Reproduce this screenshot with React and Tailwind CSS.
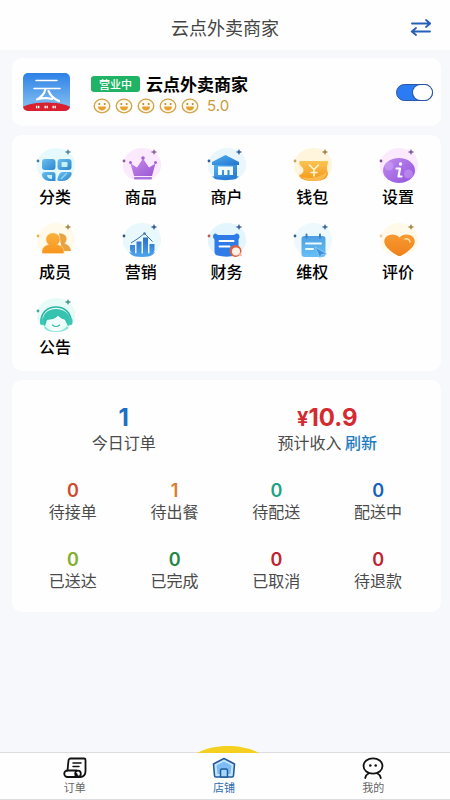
import { useState } from "react";

const IconFrame = ({ tint, spark, dot, children }) => (
    <svg viewBox="0 0 40 40" className="w-10 h-10 overflow-visible" aria-hidden="true">
        <path
            d="M21 2c10 0 18 6 19 15 1 8-4 14-10 16H11C5 30 1 25 2 18 3 9 11 2 21 2z"
            fill={tint}
        />
        <path d="M33 3.5l.8 1.7 1.9.8-1.9.8L33 8.5l-.8-1.7-1.9-.8 1.9-.8z" fill={spark} stroke={spark} strokeWidth="0.4" />
        <circle cx="3" cy="15" r="1.4" fill={dot || spark} />
        {children}
    </svg>
);

const CategoryIcon = () => (
    <IconFrame tint="#e6fafd" spark="#4a7f9c">
        <defs>
            <linearGradient id="cat" x1="0" y1="0" x2="1" y2="1">
                <stop offset="0" stopColor="#6cc0ee" />
                <stop offset="1" stopColor="#2a86cf" />
            </linearGradient>
        </defs>
        <rect x="7" y="13" width="13.5" height="11" rx="3" fill="url(#cat)" />
        <rect x="22.5" y="13" width="14" height="11" rx="3" fill="url(#cat)" />
        <rect x="26.5" y="16" width="6" height="5" rx="1" fill="#c9effc" />
        <path d="M10 26h8a2.5 2.5 0 0 1 2.5 2.5V35H14c-3 0-7-3-7-6 0-2 1-3 3-3z" fill="url(#cat)" />
        <path d="M12 29h5v4c-3 0-5-1.5-5-4z" fill="#c9effc" />
        <path d="M28 26h7c2 0 2 2 1 4-2 3-5 5-9 5h-3c-2 0-2-2-1-4 1-3 2-5 5-5z" fill="url(#cat)" />
        <path d="M26 33l6-6" stroke="#8ed5f5" strokeWidth="1.5" />
    </IconFrame>
);

const CrownIcon = () => (
    <IconFrame tint="#fbeafd" spark="#8d5a9e">
        <defs>
            <linearGradient id="crown" x1="0" y1="0" x2="1" y2="1">
                <stop offset="0" stopColor="#c88bea" />
                <stop offset="1" stopColor="#9a57d2" />
            </linearGradient>
        </defs>
        <path d="M9.5 17.5l6.500 4L22 12.500l6 9 6.500-4-3.500 12.500h-18z" fill="url(#crown)" />
        <circle cx="9.5" cy="16.5" r="1.5" fill="#a661d8" />
        <circle cx="22" cy="12" r="1.8" fill="#a661d8" />
        <circle cx="34.5" cy="16.5" r="1.5" fill="#a661d8" />
        <rect x="13" y="31" width="18" height="2.5" rx="1" fill="#b074e0" />
    </IconFrame>
);

const StoreIcon = () => (
    <IconFrame tint="#e9f7fd" spark="#2f5f96">
        <defs>
            <linearGradient id="bank" x1="0" y1="0" x2="1" y2="1">
                <stop offset="0" stopColor="#4fb0ee" />
                <stop offset="1" stopColor="#2474cf" />
            </linearGradient>
        </defs>
        <path d="M19.5 9L33 16v3H6v-3z" fill="url(#bank)" />
        <path d="M8 19h23v12c-6 3-17 3-23 0z" fill="url(#bank)" />
        <path d="M12 29v-8.500h15V29h-3.500v-5h-2v5h-3.500v-5h-2v5z" fill="#f2fbff" />
        <path d="M6 30c7 2 20 2 27 0l-3 3c-6 1.5-15 1.5-21 0z" fill="#2b7fd8" />
    </IconFrame>
);

const WalletIcon = () => (
    <IconFrame tint="#fff5dc" spark="#a17a45" dot="#c2a36a">
        <defs>
            <linearGradient id="wallet" x1="0" y1="0" x2="0" y2="1">
                <stop offset="0" stopColor="#fbc454" />
                <stop offset="1" stopColor="#f39616" />
            </linearGradient>
        </defs>
        <path d="M8 15h27c1 0 1.5 1 1 2-1.5 4-1.5 7 0 10 0 5-4 8-14 8-9 0-14-2-15-6 5-1 6-6 2-9-2-1-2-5-1-5z" fill="url(#wallet)" />
        <path d="M10 31c8 2 17 1 25-5-1 6-5 9-13 9-6 0-10-1-12-4z" fill="#ffcf6a" opacity="0.6" />
        <path d="M17.5 19l4.500 4.500 4.500-4.500M22 23.500v6.500M19 26.500h6" stroke="#fff4cf" strokeWidth="1.6" fill="none" strokeLinecap="round" />
    </IconFrame>
);

const SettingsIcon = () => (
    <IconFrame tint="#fbeafd" spark="#7d5299">
        <defs>
            <linearGradient id="info" x1="0" y1="0" x2="1" y2="1">
                <stop offset="0" stopColor="#c08bf0" />
                <stop offset="1" stopColor="#9352dc" />
            </linearGradient>
        </defs>
        <ellipse cx="21" cy="24.5" rx="16" ry="12.5" fill="url(#info)" />
        <ellipse cx="11" cy="20" rx="4.500" ry="4.500" fill="#d2a9f8" opacity="0.5" />
        <ellipse cx="30.5" cy="28" rx="4.500" ry="4.500" fill="#cfa3f7" opacity="0.5" />
        <circle cx="22.5" cy="18" r="1.7" fill="#fff" />
        <path d="M18.5 22.5h3.500L20.500 30.500h3" stroke="#fff" strokeWidth="2.2" fill="none" strokeLinecap="round" strokeLinejoin="round" />
    </IconFrame>
);

const MembersIcon = () => (
    <IconFrame tint="#fffaea" spark="#a1803f" dot="#e8b84f">
        <defs>
            <linearGradient id="member" x1="0" y1="0" x2="0" y2="1">
                <stop offset="0" stopColor="#fbb23e" />
                <stop offset="1" stopColor="#f7941d" />
            </linearGradient>
        </defs>
        <path d="M24 12.500c4.500-.5 8 2 7.500 6-.2 2-1 3-2 4 4 1.500 6 3.500 6.500 7.500h-9z" fill="#e8a441" />
        <path d="M18 12c4 0 7 2.5 7 6.5 0 2.2-1 3.8-2.5 5 4 .8 6.5 3.5 6.5 7.500 0 1-.5 1.500-1.500 1.500h-19C7.500 32.500 7 32 7 31c0-4 2.500-6.700 6.500-7.500-1.500-1.200-2.500-2.800-2.500-5C11 14.500 14 12 18 12z" fill="url(#member)" stroke="#ffe9bd" strokeWidth="0.5" />
    </IconFrame>
);

const MarketingIcon = () => (
    <IconFrame tint="#e8f8fd" spark="#2f5590">
        <defs>
            <linearGradient id="chart" x1="0" y1="0" x2="0" y2="1">
                <stop offset="0" stopColor="#2f6fc4" />
                <stop offset="1" stopColor="#4a9fea" />
            </linearGradient>
        </defs>
        <path d="M9 24h5v9c-3-1-5-2-5-4zM15.5 20.5h5V34h-5zM22 16.5h5V34h-5zM28.5 23h5v6c0 2-2 3.500-5 4.500z" fill="url(#chart)" />
        <path d="M8 31c7 2 19 2 26 0-2 4-7 5-13 5s-11-1-13-5z" fill="#4a9fea" />
        <path d="M10 22l7-4.500 6.500-5 8 8" stroke="#3672b8" strokeWidth="1" fill="none" />
        <circle cx="23.5" cy="12.5" r="1.2" fill="#3672b8" />
    </IconFrame>
);

const FinanceIcon = () => (
    <IconFrame tint="#e3f6fe" spark="#35598e" dot="#c25a4a">
        <path d="M7 16c0-2 1-3.500 2.500-3.500 1 0 1.500 1.500 3 1.500h15c1.500 0 2-1.500 3-1.500 2 0 3 1.500 3 3.500 0 1-1 2-1 3v12c0 2-1 3-3 3.500-6 1.500-12 1.500-18 0-2-.5-3-1.500-3-3.500V19c0-1-1.500-2-1.500-3z" fill="#2f7be8" />
        <path d="M13.5 20h14M13.500 25.500h10" stroke="#fff" strokeWidth="2" strokeLinecap="round" />
        <circle cx="29.5" cy="30" r="6" fill="#d9623f" />
        <circle cx="30" cy="30.500" r="4" fill="#fff1ea" />
        <path d="M31 33.5l5 2-1-4z" fill="#f3b49a" />
    </IconFrame>
);

const RightsIcon = () => (
    <IconFrame tint="#eef9fe" spark="#2f6496">
        <defs>
            <linearGradient id="rights" x1="0" y1="0" x2="0" y2="1">
                <stop offset="0" stopColor="#4f9fe2" />
                <stop offset="1" stopColor="#65c0f5" />
            </linearGradient>
        </defs>
        <rect x="9.5" y="15" width="24" height="21" rx="3" fill="url(#rights)" />
        <path d="M14.5 13.500v3M28 13.500v3" stroke="#3b7fc4" strokeWidth="2" strokeLinecap="round" />
        <path d="M14 22.500h15M14 28h7" stroke="#eafaff" strokeWidth="2" strokeLinecap="round" />
        <path d="M23 26l12 7-5.500.5L28 37z" fill="#3f93dc" stroke="#a9dcf8" strokeWidth="0.6" />
    </IconFrame>
);

const RatingIcon = () => (
    <IconFrame tint="#fff9ea" spark="#a1803f" dot="#e8cf9f">
        <defs>
            <linearGradient id="heart" x1="0" y1="0" x2="0" y2="1">
                <stop offset="0" stopColor="#f79a32" />
                <stop offset="1" stopColor="#f0801a" />
            </linearGradient>
        </defs>
        <path d="M21.5 16.500c3-4 11-4 14 0 2.500 3.500 1 7.500-2 10.500-3 3-6.500 5.500-10 7.500-1.200.8-2.800.8-4 0-3.500-2-7-4.500-10-7.500-3-3-4.500-7-2-10.500 3-4 11-4 14 0z" fill="url(#heart)" />
        <path d="M27 18c2.500-.5 4.500.5 5 3" stroke="#ffdca0" strokeWidth="1.5" fill="none" strokeLinecap="round" />
    </IconFrame>
);

const NoticeIcon = () => (
    <IconFrame tint="#e6fbf8" spark="#3e8f88" dot="#4aa59c">
        <path d="M8 26C7 18 13 13 21 13s15 5 14 13c0 3-1 4-2 4l-3-6c-3-1-5-2-7-4-3 3-7 4-11 4l-2 6c-1 0-2-1-2-4z" fill="#35c3b0" />
        <path d="M6 26C6 17 12 11 21 11s15 6 15 15" stroke="#2bb5a4" strokeWidth="1.6" fill="none" />
        <rect x="5" y="22" width="4" height="7" rx="2" fill="#3cc7b5" />
        <rect x="33.5" y="22" width="4" height="7" rx="2" fill="#3cc7b5" />
        <path d="M10 30c3 4 7 5 11 5s8-1 11-5l2 2c-4 3-8 4-13 4s-9-1-12-4z" fill="#8be3d7" />
        <path d="M12 24c4 0 8-1 11-4 2 2 4 3 7 4 0 6-4 9-9 9s-9-3-9-9z" fill="#f2fffc" />
        <path d="M17.5 29c2 2 5 2 7 0" stroke="#37b9a8" strokeWidth="1.2" fill="none" strokeLinecap="round" />
    </IconFrame>
);

const menu = [
    { label: "分类", Icon: CategoryIcon },
    { label: "商品", Icon: CrownIcon },
    { label: "商户", Icon: StoreIcon },
    { label: "钱包", Icon: WalletIcon },
    { label: "设置", Icon: SettingsIcon },
    { label: "成员", Icon: MembersIcon },
    { label: "营销", Icon: MarketingIcon },
    { label: "财务", Icon: FinanceIcon },
    { label: "维权", Icon: RightsIcon },
    { label: "评价", Icon: RatingIcon },
    { label: "公告", Icon: NoticeIcon },
];

const stats = [
    { label: "待接单", value: 0, color: "text-[#cf4a2c]" },
    { label: "待出餐", value: 1, color: "text-[#dd7a2a]" },
    { label: "待配送", value: 0, color: "text-[#1fa286]" },
    { label: "配送中", value: 0, color: "text-[#1663bd]" },
    { label: "已送达", value: 0, color: "text-[#86ac2c]" },
    { label: "已完成", value: 0, color: "text-[#24874a]" },
    { label: "已取消", value: 0, color: "text-[#bf2430]" },
    { label: "待退款", value: 0, color: "text-[#bf2430]" },
];

const OrdersTabIcon = () => (
    <svg viewBox="0 0 24 22" className="w-6 h-[22px]" fill="none" stroke="#111" strokeWidth="1.8" strokeLinecap="round" strokeLinejoin="round">
        <path d="M4.500 13.500L5.500 3.500a2 2 0 0 1 2-2H21a1.500 1.500 0 0 1 1.500 1.500V14c0 4-2 6-5.500 6" />
        <path d="M13.500 13.500H4.500a3.200 3.200 0 0 0 0 6.500H17c-2.500 0-3.500-1-3.500-3" />
        <ellipse cx="15" cy="16.800" rx="2.800" ry="3.200" />
        <path d="M10 6h8M10 9.500h6" strokeWidth="1.500" />
    </svg>
);

const ShopTabIcon = () => (
    <svg viewBox="0 0 24 22" className="w-6 h-[22px]" strokeLinejoin="round">
        <path d="M12 1.500L22.500 7l-1 11.500c-.1 1-.6 1.500-1.500 1.500H4c-.9 0-1.400-.5-1.500-1.500L1.500 7z" fill="#c3e6fc" stroke="#225a9c" strokeWidth="1.6" />
        <path d="M12 4.500L19.500 8.500 18.500 17h-13L4.500 8.500z" fill="#7dbcf3" />
        <path d="M8.500 20v-6.500c0-1 .5-1.500 1.500-1.500h4c1 0 1.500.5 1.500 1.500V20z" fill="#a5d6fa" stroke="#225a9c" strokeWidth="1.5" />
    </svg>
);

const MineTabIcon = () => (
    <svg viewBox="0 0 24 22" className="w-6 h-[22px]" fill="none" stroke="#111" strokeWidth="1.8" strokeLinecap="round">
        <ellipse cx="12" cy="9" rx="9.5" ry="7.7" />
        <path d="M7.500 16.500c-2 1-3 2.500-3.300 4.500M16.500 16.500c2 1 3 2.500 3.300 4.500" />
        <circle cx="9.3" cy="8.500" r="1.3" fill="#111" stroke="none" />
        <circle cx="14.700" cy="8.500" r="1.3" fill="#111" stroke="none" />
    </svg>
);

const tabs = [
    { label: "订单", Icon: OrdersTabIcon },
    { label: "店铺", Icon: ShopTabIcon, active: true },
    { label: "我的", Icon: MineTabIcon },
];

const Smiley = () => (
    <svg viewBox="0 0 18 16" className="w-[18px] h-4">
        <ellipse cx="9" cy="8" rx="7.8" ry="6.8" fill="#fffaf0" stroke="#cfa349" strokeWidth="1.3" />
        <circle cx="6.3" cy="6" r="1" fill="#b98a2f" />
        <circle cx="11.700" cy="6" r="1" fill="#b98a2f" />
        <path d="M5 8.500h8c0 2.500-1.800 4-4 4s-4-1.500-4-4z" fill="#e9a02f" />
    </svg>
);

const StoreLogo = () => (
    <svg viewBox="0 0 47 38" className="w-[47px] h-[38px]" aria-hidden="true">
        <defs>
            <linearGradient id="logo" x1="0" y1="0" x2="0" y2="1">
                <stop offset="0" stopColor="#2c80e6" />
                <stop offset="1" stopColor="#8cc6f3" />
            </linearGradient>
            <clipPath id="logoClip">
                <rect width="47" height="38" rx="5" />
            </clipPath>
        </defs>
        <g clipPath="url(#logoClip)">
            <rect width="47" height="38" fill="url(#logo)" />
            <path d="M13 7.500h21M11 15.500h26" stroke="#fff" strokeWidth="1.6" strokeLinecap="round" />
            <path d="M22.500 16c-1 4.500-4 8-8.500 10.500 5-1.500 10-1.800 15-.5M25.500 18c2 4.500 5 8 10.500 10" stroke="#fff" strokeWidth="2.2" fill="none" strokeLinecap="round" strokeLinejoin="round" />
            <ellipse cx="23.500" cy="37" rx="26" ry="7.500" fill="#d9202f" />
            <path d="M13 34h3.500M21.500 34H25M29.500 34H33" stroke="#fff" strokeWidth="2.400" strokeDasharray="1.400 .6" />
        </g>
    </svg>
);

export default function App() {
    const [open, setOpen] = useState(true);

    return (
        <div className="min-h-screen flex flex-col bg-[#f7f8fb] font-['Noto_Sans_CJK_SC',sans-serif] text-black">
            <header className="h-[50px] pt-1 grid grid-cols-[1fr_auto_1fr] items-center bg-[#fefefe]">
                <h1 className="col-start-2 text-[18px] leading-6 text-[#444]">云点外卖商家</h1>
                <button className="justify-self-end mr-[18px]" aria-label="切换">
                    <svg viewBox="0 0 22 18" className="w-[22px] h-[18px]" fill="none" stroke="#2460b8" strokeWidth="1.8" strokeLinecap="round" strokeLinejoin="round">
                        <path d="M2 5.500h18M16 2l4.200 3.500L16 9" />
                        <path d="M20 13.500H2M6 10l-4.200 3.500L6 17" />
                    </svg>
                </button>
            </header>

            <main className="flex-1 flex flex-col gap-[9px] pt-2 pb-6 pl-3 pr-[9px]">
                <section className="flex items-center h-[68px] pl-[11px] pr-2 rounded-[10px] bg-[#fefefe]">
                    <StoreLogo />
                    <div className="ml-[21px] pt-1 flex-1">
                        <div className="flex items-center">
                            <span className="px-2 rounded-[3px] bg-[#20b365] text-[11px] leading-4 font-medium text-white">营业中</span>
                            <h2 className="ml-[6px] text-[17px] leading-6 font-bold">云点外卖商家</h2>
                        </div>
                        <div className="flex items-center gap-1 pl-[2px]">
                            {[1, 2, 3, 4, 5].map((n) => (
                                <Smiley key={n} />
                            ))}
                            <span className="ml-1 font-['Inter'] text-[15px] leading-5 text-[#c99b3c]">5.0</span>
                        </div>
                    </div>
                    <label className="cursor-pointer">
                        <input
                            type="checkbox"
                            role="switch"
                            aria-label="营业中"
                            checked={open}
                            onChange={() => setOpen(!open)}
                            className="peer sr-only"
                        />
                        <span className="flex w-[37px] h-[17px] rounded-full border border-[#2a57a5] bg-gray-300 peer-checked:bg-[#2b7bf3] peer-checked:justify-end">
                            <span className="w-[19px] h-[15px] rounded-full bg-white shadow-[0_0_0_1px_#2a57a5]" />
                        </span>
                    </label>
                </section>

                <section className="grid grid-cols-5 gap-y-[15px] pt-[11px] pb-[15px] rounded-[10px] bg-[#fefefe]">
                    {menu.map(({ label, Icon }) => (
                        <button key={label} className="flex flex-col items-center cursor-pointer">
                            <Icon />
                            <span className="text-[16px] leading-5 font-medium">{label}</span>
                        </button>
                    ))}
                </section>

                <section className="pt-6 pb-[22px] pl-[10px] pr-3 rounded-[10px] bg-[#fefefe] text-center text-[#4a4a4a]">
                    <div className="grid grid-cols-2">
                        <div>
                            <p className="font-['Inter'] text-[24px] leading-7 font-bold text-[#1f6fc4]">1</p>
                            <p className="text-[16px] leading-5">今日订单</p>
                        </div>
                        <div>
                            <p className="flex items-baseline justify-center font-['Inter'] text-[24px] leading-7 font-bold text-[#d42a30]">
                                <span className="text-[20px] leading-5">¥</span>10.9
                            </p>
                            <p className="text-[16px] leading-5">
                                预计收入 <button className="leading-5 text-[#1f7bc0] font-medium cursor-pointer">刷新</button>
                            </p>
                        </div>
                    </div>
                    <div className="mt-[29px] grid grid-cols-4 gap-y-[29px]">
                        {stats.map((stat) => (
                            <div key={stat.label}>
                                <p className={`font-['Inter'] text-[18px] leading-5 font-semibold ${stat.color}`}>{stat.value}</p>
                                <p className="text-[16px] leading-5">{stat.label}</p>
                            </div>
                        ))}
                    </div>
                </section>
            </main>

            <nav className="relative grid grid-cols-3 pr-[2px] border-y border-[#dcdde0] bg-[#fefefe]">
                <svg viewBox="0 0 62 8" className="absolute left-1/2 -top-2 ml-[-28px] w-[62px] h-2" aria-hidden="true">
                    <path d="M0 8C16-1.500 46-1.500 62 8z" fill="#f6d021" />
                </svg>
                {tabs.map(({ label, Icon, active }) => (
                    <a key={label} href="#" className="flex flex-col items-center pt-1 pb-1">
                        <Icon />
                        <span className={`text-[11px] leading-4 ${active ? "text-[#2f6cab]" : "text-[#666]"}`}>{label}</span>
                    </a>
                ))}
            </nav>
        </div>
    );
}
